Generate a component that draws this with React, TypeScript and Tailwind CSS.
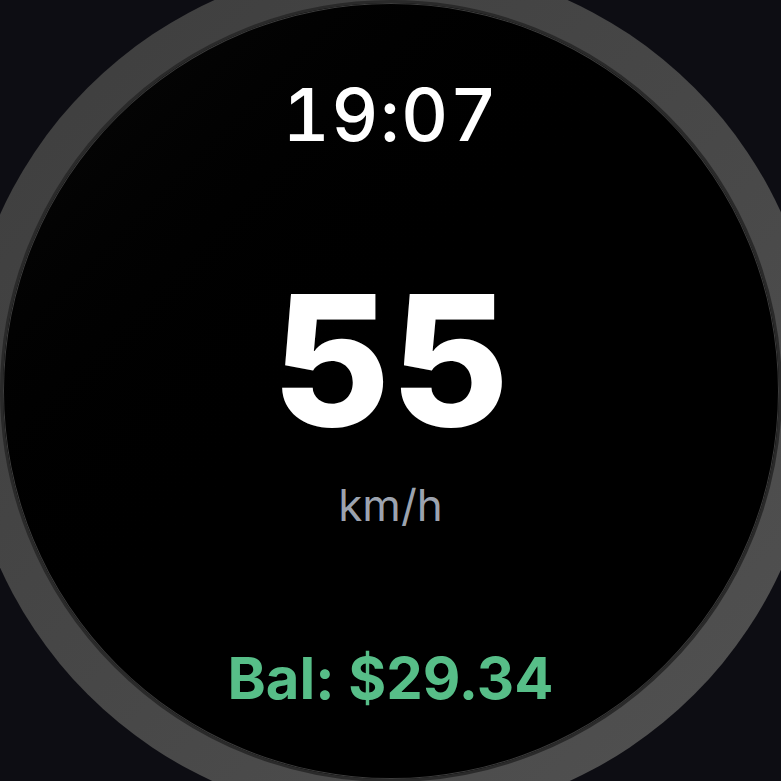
export default function App() {
  return (
    <div className="h-[781px] w-full overflow-hidden bg-[#0d0d13] flex items-center justify-center" style={{ fontFamily: "Inter, 'Noto Sans', sans-serif" }}>
      {/* bezel */}
      <div className="w-[858px] h-[858px] shrink-0 rounded-full p-[38px] bg-gradient-to-br from-[#3d3d3d] via-[#474747] to-[#525252]">
        {/* screen */}
        <div className="w-full h-full rounded-full border-[3px] border-[#2a2a2a] shadow-[inset_0_0_0_1px_#3c3c3c] bg-gradient-to-br from-[#0b0b0b] via-black to-black flex flex-col items-center">
          <div className="mt-[75px] text-white text-[73px] leading-none font-medium tabular-nums tracking-[0.02em]">19:07</div>
          <div className="mt-[118px] text-white text-[182px] leading-none font-extrabold">55</div>
          <div className="mt-[32px] text-[#9ca3af] text-[44px] leading-none font-normal">km/h</div>
          <div className="mt-[122px] text-[#57be88] text-[58px] leading-none font-bold">Bal: $29.34</div>
        </div>
      </div>
    </div>
  );
}
